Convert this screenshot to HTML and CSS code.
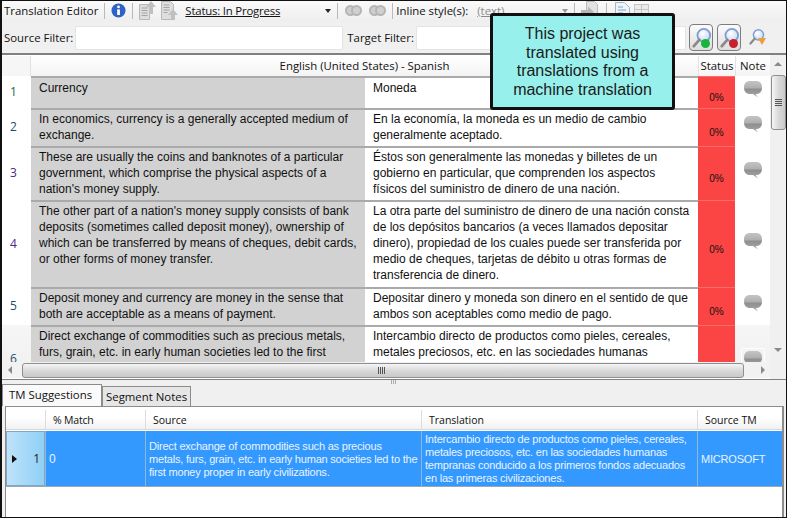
FILE: index.html
```html
<!DOCTYPE html>
<html lang="en">
<head>
    <meta charset="UTF-8">
    <title>Translation Editor</title>
    <link rel="stylesheet" href="styles.css">
</head>
<body>
    <svg class="defs" width="0" height="0">
        <defs>
            <linearGradient id="bubbleFill" x1="0" y1="0" x2="0" y2="1">
                <stop offset="0" stop-color="#c4c4c4"/>
                <stop offset="0.4" stop-color="#b0b0b0"/>
                <stop offset="0.5" stop-color="#8f8f8f"/>
                <stop offset="1" stop-color="#a9a9a9"/>
            </linearGradient>
            <radialGradient id="lensGlass" cx="0.4" cy="0.35" r="0.8">
                <stop offset="0" stop-color="#ffffff"/>
                <stop offset="1" stop-color="#bcd2f0"/>
            </radialGradient>
        </defs>
        <symbol id="bubble" viewBox="0 0 18 17">
            <path d="M6 0h6c4 0 6 2.600 6 6.500S16 13 12 13h-.5L14 16.500 9 13H6c-4 0-6-2.600-6-6.500S2 0 6 0z" fill="url(#bubbleFill)"/>
        </symbol>
        <symbol id="doc-up" viewBox="0 0 17 19">
            <path d="M.5 3.500h10v15H.5z" fill="#dedede" stroke="#b8b8b8"/>
            <path d="M2.500 7h6M2.500 9.500h6M2.500 12h6M2.500 14.500h6" stroke="#a4a4a4"/>
            <path d="M12 0l5 6h-3v7h-4V6H7z" fill="#c0c0c0"/>
        </symbol>
        <symbol id="doc-low" viewBox="0 0 17 19">
            <path d="M.5.500h9l3 3v15H.5z" fill="#dedede" stroke="#b8b8b8"/>
            <path d="M2.500 4h6M2.500 6.500h6M2.500 9h6M2.500 11.500h4" stroke="#a4a4a4"/>
            <path d="M12 8l5 6h-3v5h-4v-5H7z" fill="#c0c0c0"/>
        </symbol>
        <symbol id="doc-arrow" viewBox="0 0 17 19">
            <path d="M5.500.500h8l3 3v15h-11z" fill="#e2e2e2" stroke="#bcbcbc"/>
            <path d="M0 9h7V5.500l6 5.500-6 5.500V13H0z" fill="#b8b8b8"/>
        </symbol>
        <symbol id="doc-blue" viewBox="0 0 15 18">
            <path d="M.5.500h9l5 5v12H.5z" fill="#eef3f8" stroke="#a9b6c4"/>
            <path d="M3 5h5M3 8h8M3 11h5M3 14h8" stroke="#9fc0dc" stroke-width="1.500"/>
        </symbol>
        <symbol id="lens" viewBox="0 0 22 24">
            <circle cx="13" cy="9" r="7" fill="url(#lensGlass)" stroke="#7f9fd0" stroke-width="2"/>
            <path d="M8 14l-6 7" stroke="#8a8a8a" stroke-width="3" stroke-linecap="round"/>
        </symbol>
    </svg>

    <div class="app">
        <div class="toolbar">
            <span class="tool-title">Translation Editor</span>
            <span class="sep"></span>
            <svg class="info" viewBox="0 0 16 16" width="15" height="15">
                <circle cx="8" cy="8" r="7.500" fill="#2f62c4"/>
                <circle cx="8" cy="4.200" r="1.500" fill="#fff"/>
                <rect x="6.600" y="6.800" width="2.900" height="6" fill="#fff"/>
            </svg>
            <span class="sep"></span>
            <svg class="doc-icon" width="17" height="19"><use href="#doc-up"/></svg>
            <svg class="doc-icon" width="17" height="19"><use href="#doc-low"/></svg>
            <span class="tool-link status-link">Status: In Progress</span>
            <span class="caret"></span>
            <span class="sep"></span>
            <span class="rings"><i></i><i></i></span>
            <span class="rings"><i></i><i></i></span>
            <span class="sep"></span>
            <span class="tool-title inline-title">Inline style(s):</span>
            <span class="tool-link muted style-link">(text)</span>
            <span class="caret light"></span>
            <span class="sep"></span>
            <svg class="doc-icon" width="17" height="19"><use href="#doc-arrow"/></svg>
            <span class="sep"></span>
            <svg class="doc-icon blue-doc" width="15" height="18"><use href="#doc-blue"/></svg>
            <span class="grid-icon"></span>
        </div>

        <div class="filters">
            <label class="filter-label">Source Filter:</label>
            <div class="filter-input source-input"></div>
            <label class="filter-label target-label">Target Filter:</label>
            <div class="filter-input target-input"></div>
            <button class="find-btn">
                <svg width="20" height="22"><use href="#lens"/></svg>
                <i class="dot green"></i>
            </button>
            <button class="find-btn">
                <svg width="20" height="22"><use href="#lens"/></svg>
                <i class="dot red"></i>
            </button>
            <span class="find-plain">
                <svg width="16" height="18"><use href="#lens"/></svg>
                <i class="funnel"></i>
            </span>
        </div>

        <div class="editor">
            <div class="editor-main">
                <div class="seg-table">
                    <div class="seg-head">
                        <div class="h-corner"></div>
                        <div class="h-title">English (United States) - Spanish</div>
                        <div class="h-status">Status</div>
                        <div class="h-note">Note</div>
                    </div>
                    <div class="seg-row r1">
                        <div class="num green-num">1</div>
                        <div class="src">Currency</div>
                        <div class="tgt">Moneda</div>
                        <div class="status">0%</div>
                        <div class="note"><svg width="18" height="17"><use href="#bubble"/></svg></div>
                    </div>
                    <div class="seg-row r2">
                        <div class="num">2</div>
                        <div class="src">In economics, currency is a generally accepted medium of exchange.</div>
                        <div class="tgt">En la economía, la moneda es un medio de cambio generalmente aceptado.</div>
                        <div class="status">0%</div>
                        <div class="note"><svg width="18" height="17"><use href="#bubble"/></svg></div>
                    </div>
                    <div class="seg-row r3">
                        <div class="num purple">3</div>
                        <div class="src">These are usually the coins and banknotes of a particular government, which comprise the physical aspects of a nation's money supply.</div>
                        <div class="tgt">Éstos son generalmente las monedas y billetes de un gobierno en particular, que comprenden los aspectos físicos del suministro de dinero de una nación.</div>
                        <div class="status">0%</div>
                        <div class="note"><svg width="18" height="17"><use href="#bubble"/></svg></div>
                    </div>
                    <div class="seg-row r4">
                        <div class="num purple">4</div>
                        <div class="src">The other part of a nation's money supply consists of bank deposits (sometimes called deposit money), ownership of which can be transferred by means of cheques, debit cards, or other forms of money transfer.</div>
                        <div class="tgt">La otra parte del suministro de dinero de una nación consta de los depósitos bancarios (a veces llamados depositar dinero), propiedad de los cuales puede ser transferida por medio de cheques, tarjetas de débito u otras formas de transferencia de dinero.</div>
                        <div class="status">0%</div>
                        <div class="note"><svg width="18" height="17"><use href="#bubble"/></svg></div>
                    </div>
                    <div class="seg-row r5">
                        <div class="num">5</div>
                        <div class="src">Deposit money and currency are money in the sense that both are acceptable as a means of payment.</div>
                        <div class="tgt">Depositar dinero y moneda son dinero en el sentido de que ambos son aceptables como medio de pago.</div>
                        <div class="status">0%</div>
                        <div class="note"><svg width="18" height="17"><use href="#bubble"/></svg></div>
                    </div>
                    <div class="seg-row r6">
                        <div class="num">6</div>
                        <div class="src">Direct exchange of commodities such as precious metals, furs, grain, etc. in early human societies led to the first money proper in early civilizations.</div>
                        <div class="tgt">Intercambio directo de productos como pieles, cereales, metales preciosos, etc. en las sociedades humanas tempranas conducido a los primeros fondos adecuados en las primeras civilizaciones.</div>
                        <div class="status"></div>
                        <div class="note"><span class="note-box"><svg width="18" height="17"><use href="#bubble"/></svg></span></div>
                    </div>
                </div>
                <div class="hscroll">
                    <span class="arrow left"></span>
                    <div class="hthumb"><span class="grip"></span></div>
                    <span class="arrow right"></span>
                </div>
            </div>
            <div class="vscroll">
                <span class="arrow up"></span>
                <div class="vthumb"><span class="grip-v"></span></div>
                <span class="vspace"></span>
                <span class="arrow down"></span>
            </div>
        </div>

        <div class="splitter"><span class="split-grip"></span></div>

        <div class="tabs">
            <div class="tab active">TM Suggestions</div>
            <div class="tab">Segment Notes</div>
        </div>

        <div class="tm-panel">
            <div class="tm-row tm-head">
                <div></div>
                <div class="tm-h match-h">% Match</div>
                <div class="tm-h">Source</div>
                <div class="tm-h">Translation</div>
                <div class="tm-h">Source TM</div>
            </div>
            <div class="tm-row tm-sel">
                <div class="tm-num"><span class="pointer"></span><span>1</span></div>
                <div class="tm-cell tm-zero">0</div>
                <div class="tm-cell"><span>Direct exchange of commodities such as precious<br>metals, furs, grain, etc. in early human societies led to the<br>first money proper in early civilizations.</span></div>
                <div class="tm-cell"><span>Intercambio directo de productos como pieles, cereales,<br>metales preciosos, etc. en las sociedades humanas<br>tempranas conducido a los primeros fondos adecuados<br>en las primeras civilizaciones.</span></div>
                <div class="tm-cell">MICROSOFT</div>
            </div>
        </div>

        <div class="callout">This project was translated using translations from a machine translation</div>
    </div>
</body>
</html>
```

FILE: styles.css
```css
* {
    box-sizing: border-box;
}
html, body {
    margin: 0;
    padding: 0;
    background: #fff;
}
.defs {
    position: absolute;
}
.app {
    position: relative;
    width: 787px;
    height: 518px;
    border: 1px solid #111;
    border-left-width: 2px;
    background: #f0f0f0;
    display: flex;
    flex-direction: column;
    overflow: hidden;
    font-family: "Open Sans", "Noto Sans", sans-serif;
    font-size: 11.4px;
    color: #111;
}

/* top toolbar */
.toolbar {
    height: 21px;
    display: flex;
    align-items: center;
    padding: 0 0 2px 2px;
    background: linear-gradient(#fafafa, #eeeeee);
    white-space: nowrap;
}
.sep {
    width: 1px;
    height: 16px;
    margin: 0 6px;
    background: #b9b9b9;
}
.info {
    margin: 0;
    flex: none;
}
.doc-icon {
    flex: none;
    margin: 0 2px 0 0;
}
.doc-icon + .doc-icon {
    margin-left: 3px;
}
.blue-doc {
    margin-left: 2px;
}
.tool-link {
    text-decoration: underline;
}
.status-link {
    width: 140px;
    margin-left: 5px;
    letter-spacing: -0.2px;
}
.caret {
    width: 0;
    height: 0;
    border: 3px solid transparent;
    border-top: 4px solid #222;
    border-bottom: 0;
}
.caret.light {
    border-top-color: #999;
    margin-left: 58px;
}
.rings {
    display: flex;
    width: 17px;
    margin: 0 3px 0 1px;
}
.rings + .rings {
    margin: 0 0 0 4px;
}
.rings i {
    width: 11px;
    height: 11px;
    border-radius: 50%;
    background: #cfcfcf;
    border: 2px solid #b5b5b5;
}
.rings i + i {
    margin-left: -5px;
}
.inline-title {
    margin-left: -3px;
}
.muted {
    color: #8c8c8c;
}
.style-link {
    margin-left: 9px;
}
.grid-icon {
    width: 15px;
    height: 14px;
    margin-left: 2px;
    border: 1px solid #c6c6c6;
    background:
        linear-gradient(#c6c6c6, #c6c6c6) 0 4px / 100% 1px no-repeat,
        linear-gradient(#c6c6c6, #c6c6c6) 6px 0 / 1px 100% no-repeat,
        #ececec;
}

/* filter row */
.filters {
    height: 33px;
    display: flex;
    align-items: center;
    padding-left: 2px;
    border-bottom: 2px solid #808080;
    background: #f0f0f0;
}
.filter-label {
    white-space: nowrap;
}
.filter-input {
    height: 24px;
    background: #fff;
    border: 1px solid #e4e4e4;
    border-radius: 2px;
}
.source-input {
    width: 268px;
    margin-left: 2px;
}
.target-label {
    margin-left: 4px;
}
.target-input {
    width: 270px;
    margin-left: 2px;
}
.find-btn {
    position: relative;
    width: 24px;
    height: 27px;
    margin-left: 4px;
    padding: 2px;
    border: 1px solid #7d7d7d;
    border-radius: 4px;
    background: linear-gradient(#fbfbfb, #dedede);
}
.filter-input + .find-btn {
    margin-left: 3px;
}
.find-plain {
    position: relative;
    width: 18px;
    height: 20px;
    margin-left: 8px;
}
.dot {
    position: absolute;
    right: 2px;
    bottom: 2px;
    width: 9px;
    height: 9px;
    border-radius: 50%;
}
.dot.green {
    background: #17b53c;
}
.dot.red {
    background: #c8202c;
}
.funnel {
    position: absolute;
    right: 1px;
    bottom: 3px;
    border: 4px solid transparent;
    border-top: 7px solid #ee9c3c;
    border-bottom: 0;
}

/* segment table */
.editor {
    display: flex;
    height: 325px;
    background: #fff;
    border-bottom: 1px solid #808080;
}
.editor-main {
    width: 768px;
    display: flex;
    flex-direction: column;
}
.seg-table {
    height: 307px;
    overflow: hidden;
    padding-top: 1px;
    background: #fff;
}
.seg-head,
.seg-row {
    display: grid;
    grid-template-columns: 29px 334px 333px 37px 35px;
}
.seg-head {
    height: 20px;
    grid-template-columns: 29px 667px 37px 35px;
    line-height: 19px;
    text-align: center;
    background: #fdfdfd;
}
.h-corner {
    border-right: 1px solid #e2e2e2;
    background: #f6f6f6;
}
.h-title {
    padding-right: 0;
    background: linear-gradient(#fff, #f3f3f3);
}
.h-status,
.h-note {
    border-left: 1px solid #e2e2e2;
    background: linear-gradient(#fff, #f5f5f5);
}
.seg-row {
    font-family: "Liberation Sans", Arial, sans-serif;
    font-size: 12px;
    line-height: 16px;
}
.r1 { height: 32px; }
.r2 { height: 38px; }
.r3 { height: 54px; }
.r4 { height: 87px; }
.r5 { height: 38px; }
.r6 { height: 68px; }
.num {
    display: flex;
    align-items: center;
    justify-content: center;
    padding-right: 6px;
    font-family: "Open Sans", sans-serif;
    font-size: 12px;
    color: #1a4f6a;
}
.green-num {
    color: #1a6a3a;
}
.num.purple {
    color: #4a2a80;
}
.r6 .num {
    background: linear-gradient(#f6f6f6, #eeeeee);
}
.src {
    padding: 1px 4px 0 8px;
    background: #d2d2d2;
    border-top: 2px solid #aaa;
}
.tgt {
    padding: 1px 8px 0 8px;
    background: #fff;
    border-top: 2px solid #aaa;
}
.r1 .src,
.r1 .tgt {
    padding-top: 2px;
}
.status {
    display: flex;
    align-items: center;
    justify-content: center;
    padding-top: 11px;
    background: #fb4444;
    font-size: 10px;
    border-top: 1px solid #f86c6c;
}
.note {
    display: flex;
    align-items: center;
    justify-content: center;
    padding-bottom: 5px;
}
.note-box {
    height: 26px;
    padding: 2px 2px 0;
    border: 1px solid #fff;
    border-radius: 2px;
}
.r6 .note {
    align-items: flex-start;
    padding: 23px 0 0;
    background: linear-gradient(#f6f6f6, #eeeeee);
}

/* scrollbars */
.hscroll {
    height: 16px;
    display: flex;
    align-items: center;
    background: #f2f2f2;
}
.hthumb {
    width: 722px;
    height: 15px;
    margin: 0 1px 0 10px;
    border: 1px solid #8e8e8e;
    border-radius: 3px;
    background: linear-gradient(#f6f6f6, #d9d9d9 50%, #c9c9c9);
    display: flex;
    align-items: center;
    padding-left: 355px;
}
.grip {
    width: 7px;
    height: 7px;
    background: repeating-linear-gradient(90deg, #555 0 1px, transparent 1px 2px);
}
.arrow {
    width: 0;
    height: 0;
    border: 4px solid transparent;
}
.arrow.left {
    margin-left: 6px;
    border-right-color: #8a8a8a;
    border-left: 0;
}
.arrow.right {
    margin-left: 16px;
    border-left-color: #8a8a8a;
    border-right: 0;
}
.vscroll {
    width: 16px;
    display: flex;
    flex-direction: column;
    align-items: center;
    background: #f0f0f0;
    padding-top: 7px;
}
.arrow.up {
    border-bottom-color: #8a8a8a;
    border-top: 0;
}
.arrow.down {
    border-top-color: #8a8a8a;
    border-bottom: 0;
    margin-bottom: 27px;
}
.vthumb {
    width: 15px;
    height: 55px;
    margin-top: 9px;
    border: 1px solid #8e8e8e;
    border-radius: 3px;
    background: linear-gradient(90deg, #f6f6f6, #d9d9d9 50%, #c9c9c9);
    display: flex;
    align-items: center;
    justify-content: center;
}
.grip-v {
    width: 7px;
    height: 7px;
    background: repeating-linear-gradient(#555 0 1px, transparent 1px 2px);
}
.vspace {
    flex: 1;
}

/* splitter + tabs */
.splitter {
    height: 4px;
    display: flex;
    justify-content: center;
}
.split-grip {
    width: 6px;
    height: 4px;
    background: repeating-linear-gradient(90deg, #aaa 0 1px, transparent 1px 2px);
}
.tabs {
    display: flex;
    align-items: flex-end;
    height: 22px;
}
.tab {
    height: 20px;
    padding: 0 3px;
    line-height: 19px;
    white-space: nowrap;
    border: 1px solid #8c8c8c;
    border-bottom: 0;
    background: #e6e6e6;
}
.tab.active {
    height: 22px;
    width: 100px;
    padding: 0 6px;
    line-height: 20px;
    background: #fafafa;
}

/* tm suggestions grid */
.tm-panel {
    flex: 1;
    margin: 0 2px 0 3px;
    background: #fff;
    border: 1px solid #8c8c8c;
    border-right-width: 2px;
    border-bottom: 0;
    padding: 3px 0 0;
}
.tm-row {
    display: grid;
    grid-template-columns: 39px 100px 276px 276px 85px;
}
.tm-head {
    height: 20px;
    line-height: 20px;
    font-size: 10.5px;
    background: linear-gradient(#fff 40%, #f1f1f1);
    border-bottom: 1px solid #d8d8d8;
}
.tm-h {
    padding-left: 7px;
    border-left: 1px solid #dcdcdc;
}
.match-h {
    padding-left: 7px;
    letter-spacing: -0.2px;
}
.tm-sel {
    height: 56px;
    margin-top: 1px;
    font-family: "Liberation Sans", Arial, sans-serif;
    font-size: 11px;
    letter-spacing: -0.2px;
    line-height: 13px;
    color: #eaf3ff;
    background: #3399ff;
    border-bottom: 1px solid #9aa7b4;
}
.tm-num {
    display: flex;
    align-items: center;
    justify-content: space-between;
    padding: 0 4px 0 5px;
    color: #222;
    font-family: "Open Sans", sans-serif;
    font-size: 12px;
    background: linear-gradient(90deg, #bfe2fa, #8fd0f5);
    border: 1px solid #7fa6c4;
}
.pointer {
    width: 0;
    height: 0;
    border: 4px solid transparent;
    border-left: 5px solid #111;
    border-right: 0;
}
.tm-cell {
    display: flex;
    align-items: center;
    padding: 1px 0 0 3px;
    white-space: nowrap;
    border-left: 1px solid #8fb6dd;
}
.tm-zero {
    font-size: 12px;
}

/* overlay note */
.callout {
    position: absolute;
    left: 488px;
    top: 12px;
    width: 185px;
    height: 97px;
    padding: 9px 14px 0;
    text-align: center;
    font-family: "Liberation Sans", Arial, sans-serif;
    font-size: 16px;
    line-height: 18.7px;
    color: #1a1a1a;
    background: #98f0ec;
    border: 3px solid #111;
    border-radius: 3px;
}
```
